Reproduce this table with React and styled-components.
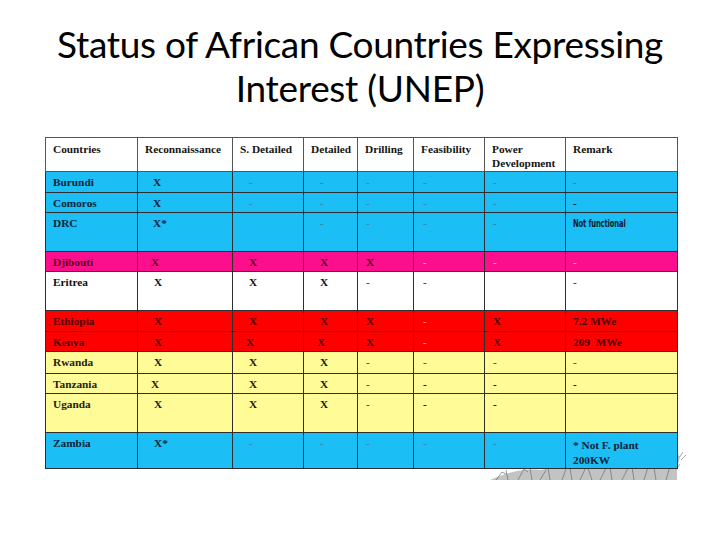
import React from "react";
import styled, { createGlobalStyle } from "styled-components";

const GlobalStyle = createGlobalStyle`
  html, body {
    margin: 0;
    padding: 0;
    background: #ffffff;
  }
`;

const TONES = {
  blue: { bg: "#1bbff5", ink: "#0d2338", dash: "#3f84a8" },
  pink: { bg: "#fb0f8c", ink: "#5c0022", dash: "#ff9ccd" },
  white: { bg: "#ffffff", ink: "#111111", dash: "#444444" },
  red: { bg: "#fe0000", ink: "#4f0000", dash: "#ff9090" },
  yellow: { bg: "#fffb97", ink: "#1c1c10", dash: "#55553a" },
};

const columns = [
  { title: "Countries", width: 92 },
  { title: "Reconnaissance", width: 95, indent: 15 },
  { title: "S. Detailed", width: 71, indent: 16 },
  { title: "Detailed", width: 54, indent: 16 },
  { title: "Drilling", width: 56, indent: 8 },
  { title: "Feasibility", width: 71, indent: 9 },
  { title: ["Power", "Development"], width: 81, indent: 8 },
  { title: "Remark", width: 112, indent: 7 },
];

// "-" is a faint dash, "=" a bold dash, "NF" the narrow remark
const rows = [
  { name: "Burundi", tone: "blue", h: 21, cells: ["X", "-", "-", "-", "-", "-", "-"] },
  { name: "Comoros", tone: "blue", h: 20, cells: ["X", "-", "-", "-", "-", "-", "="] },
  { name: "DRC", tone: "blue", h: 39, cells: ["X*", "", "-", "-", "-", "-", "NF"] },
  { name: "Djibouti", tone: "pink", h: 20, cells: ["X", "X", "X", "X", "-", "-", "-"], shift: [-2, 0, 0, 0, 0, 0, 0] },
  { name: "Eritrea", tone: "white", h: 39, cells: ["X", "X", "X", "-", "-", "", "-"], shift: [1, 0, 0, 0, 0, 0, 0] },
  { name: "Ethiopia", tone: "red", h: 21, cells: ["X", "X", "X", "X", "-", "X", "7.2 MWe"], shift: [1, 0, 0, 0, 0, 0, 0] },
  { name: "Kenya", tone: "red", h: 20, cells: ["X", "X", "X", "X", "-", "X", "209  MWe"], shift: [1, -3, -3, 0, 0, 0, 0] },
  { name: "Rwanda", tone: "yellow", h: 22, cells: ["X", "X", "X", "-", "-", "-", "-"], shift: [1, 0, 0, 0, 0, 0, 0] },
  { name: "Tanzania", tone: "yellow", h: 20, cells: ["X", "X", "X", "-", "=", "=", "="], shift: [-2, 0, 0, 0, 0, 0, 0] },
  { name: "Uganda", tone: "yellow", h: 39, cells: ["X", "X", "X", "-", "=", "=", ""], shift: [1, 0, 0, 0, 0, 0, 0] },
  { name: "Zambia", tone: "blue", h: 34, cells: ["X*", "-", "-", "-", "-", "-", "Z"], shift: [1, 0, 0, 0, 0, 0, 0] },
];

const Slide = styled.div`
  position: relative;
  width: 720px;
  height: 540px;
  overflow: hidden;
  background: #ffffff;
  display: flex;
  flex-direction: column;
  align-items: flex-start;
`;

const Title = styled.h1`
  align-self: stretch;
  margin: 22px 0 0;
  height: 115px;
  font-family: "Lato", "Open Sans", sans-serif;
  font-weight: 400;
  font-size: 37px;
  line-height: 44px;
  letter-spacing: -0.3px;
  text-align: center;
  color: #000000;
`;

const TreeArt = styled.svg`
  position: absolute;
  left: 480px;
  top: 430px;
  width: 220px;
  height: 60px;
`;

const TableWrap = styled.div`
  position: relative;
  margin-left: 45px;
`;

const Grid = styled.table`
  border-collapse: collapse;
  table-layout: fixed;
  width: 632px;
  font-family: "Liberation Serif", "Times New Roman", serif;
  font-weight: 700;
  font-size: 11.3px;
  line-height: 13px;
  border: 1.5px solid #2b2b2b;
`;

const HeadCell = styled.th`
  height: 29px;
  padding: 4px 4px 0 7px;
  vertical-align: top;
  text-align: left;
  background: #ffffff;
  color: #151515;
  border: 1px solid #555555;
  line-height: 14px;
`;

const Row = styled.tr`
  height: ${(p) => p.$h}px;
  background: ${(p) => TONES[p.$tone].bg};
  color: ${(p) => TONES[p.$tone].ink};
`;

const Cell = styled.td`
  padding: 4px 2px 0 ${(p) => p.$indent}px;
  vertical-align: top;
  text-align: left;
  border: 1px solid #2f2f2f;
  white-space: pre;
`;

const Dash = styled.span`
  font-weight: 700;
  color: ${(p) => TONES[p.$tone].dash};
`;

const BoldDash = styled.span`
  font-weight: 700;
  color: #111111;
`;

const Narrow = styled.span`
  display: inline-block;
  font-family: "DejaVu Sans Condensed", "DejaVu Sans", sans-serif;
  font-weight: 700;
  font-size: 10.5px;
  letter-spacing: -0.2px;
  transform: scaleX(0.72);
  transform-origin: left center;
  color: #0b1a2c;
`;

const TwoLine = styled.span`
  display: block;
  white-space: normal;
  line-height: 15px;
  margin-top: 1px;
`;

const renderValue = (value, tone) => {
  if (value === "-") return <Dash $tone={tone}>-</Dash>;
  if (value === "=") return <BoldDash>-</BoldDash>;
  if (value === "NF") return <Narrow>Not functional</Narrow>;
  if (value === "Z")
    return (
      <TwoLine>
        * Not F. plant
        <br />
        200KW
      </TwoLine>
    );
  return value;
};

const Tree = () => (
  <TreeArt viewBox="0 0 220 60">
    <g stroke="#9a9a9a" strokeWidth="1" fill="none" opacity="0.85">
      <path d="M197 36 L199 28 L203 22 M199 28 L196 20 M201 30 L206 25" />
      <path d="M196 40 L200 34" />
    </g>
    <g fill="#b4b4b4" opacity="0.8">
      <path d="M10 50 C24 44 40 38 60 40 C80 36 96 40 116 37 C136 40 156 35 176 38 C186 36 192 36 197 34 L197 50 Z" />
    </g>
    <g stroke="#6f6f6f" strokeWidth="0.9" fill="none" opacity="0.8">
      <path d="M16 50 L22 42 L26 44 M28 50 L26 40 M38 50 L44 39 L48 42 M52 50 L50 38 M60 50 L66 40 M70 50 L68 38 L72 36 M82 50 L86 39 M92 50 L90 38 M100 50 L106 37 M112 50 L108 38 M120 50 L126 38 M132 50 L130 37 M142 50 L148 38 M154 50 L152 37 M164 50 L168 37 M176 50 L174 38 M186 50 L190 36" />
    </g>
  </TreeArt>
);

const App = () => (
  <>
    <GlobalStyle />
    <Slide>
      <Tree />
      <Title>
        Status of African Countries Expressing
        <br />
        Interest (UNEP)
      </Title>
      <TableWrap>
        <Grid>
          <colgroup>
            {columns.map((c, i) => (
              <col key={i} style={{ width: c.width }} />
            ))}
          </colgroup>
          <thead>
            <tr>
              {columns.map((c, i) => (
                <HeadCell key={i}>
                  {Array.isArray(c.title) ? (
                    <>
                      {c.title[0]}
                      <br />
                      {c.title[1]}
                    </>
                  ) : (
                    c.title
                  )}
                </HeadCell>
              ))}
            </tr>
          </thead>
          <tbody>
            {rows.map((r) => (
              <Row key={r.name} $h={r.h} $tone={r.tone}>
                <Cell $indent={7}>{r.name}</Cell>
                {r.cells.map((v, i) => (
                  <Cell key={i} $indent={columns[i + 1].indent + (r.shift ? r.shift[i] : 0)}>
                    {renderValue(v, r.tone)}
                  </Cell>
                ))}
              </Row>
            ))}
          </tbody>
        </Grid>
      </TableWrap>
    </Slide>
  </>
);

export default App;
